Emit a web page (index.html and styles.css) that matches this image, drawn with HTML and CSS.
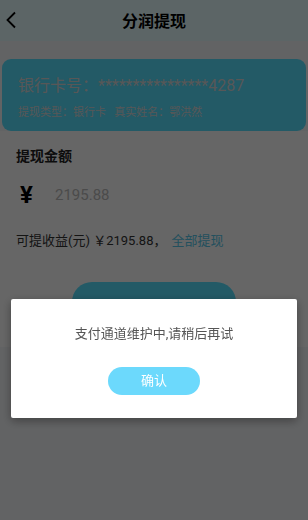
FILE: index.html
```html
<!DOCTYPE html>
<html lang="zh">
<head>
    <meta charset="UTF-8">
    <title>分润提现</title>
    <link rel="stylesheet" href="styles.css">
</head>
<body>
    <div class="page">
        <div class="header">
            <svg class="back" width="12" height="18" viewBox="0 0 12 18"><path d="M10 1.5 L2.5 9 L10 16.5" fill="none" stroke="#000" stroke-width="1.8"/></svg>
            <div class="title">分润提现</div>
        </div>

        <div class="card">
            <div class="card-no">银行卡号：****************4287</div>
            <div class="card-info">提现类型：银行卡&nbsp;&nbsp;&nbsp;真实姓名：鄂洪然</div>
        </div>

        <div class="form">
            <div class="label">提现金额</div>
            <div class="amount">
                <span class="yen">¥</span>
                <span class="num">2195.88</span>
            </div>
            <div class="usable">可提收益(元) ￥2195.88，<span class="all">全部提现</span></div>
            <div class="submit"></div>
        </div>
    </div>

    <div class="mask">
        <div class="dialog">
            <p class="msg">支付通道维护中,请稍后再试</p>
            <div class="ok">确认</div>
        </div>
    </div>
</body>
</html>
```

FILE: styles.css
```css
body,p{ margin: 0; padding: 0; }
body{
    font-family: Roboto, "Noto Sans CJK SC", sans-serif;
    background: #f5f7fa;
}

.page{
    width: 308px;
    height: 520px;
    overflow: hidden;
}

.header{
    height: 41px;
    background: #e6fcff;
    display: flex;
    align-items: center;
    justify-content: center;
    position: relative;
}
.header .back{
    position: absolute;
    left: 5px;
    top: 11px;
}
.header .title{
    font-size: 16px;
    font-weight: bold;
    color: #000;
    margin-top: -2px;
}

.card{
    margin: 18px 2px 0;
    height: 72px;
    background: #58e0ff;
    border-radius: 9px;
    padding: 0 16px;
    box-sizing: border-box;
    color: #dadada;
}
.card-no{
    padding-top: 16px;
    font-size: 16px;
    line-height: 22px;
}
.card-info{
    margin-top: 8px;
    font-size: 11px;
    line-height: 16px;
}

.form{
    background: #fff;
    padding: 16px 16px 0;
    height: 200px;
}
.label{
    font-size: 14px;
    font-weight: bold;
    color: #222;
    line-height: 18px;
}
.amount{
    display: flex;
    align-items: center;
    height: 40px;
    margin-top: 10px;
}
.yen{
    font-size: 24px;
    font-weight: bold;
    color: #000;
    width: 38px;
    padding-left: 4px;
}
.num{
    font-size: 15px;
    color: #bbb;
    margin-left: -3px;
}
.usable{
    margin-top: 17px;
    font-size: 13px;
    color: #333;
    line-height: 18px;
}
.usable .all{
    color: #58c8ea;
    margin-left: 5px;
}
.submit{
    width: 164px;
    height: 40px;
    border-radius: 20px;
    background: #58e0ff;
    margin: 32px auto 0;
}

.mask{
    position: fixed;
    left: 0;
    top: 0;
    width: 100%;
    height: 100%;
    background: rgba(0,0,0,.6);
}
.dialog{
    position: absolute;
    left: 11px;
    right: 11px;
    top: 299px;
    height: 119px;
    background: #fff;
    border-radius: 2px;
    box-shadow: 0 3px 10px rgba(0,0,0,.35);
    display: flex;
    flex-direction: column;
    align-items: center;
}
.msg{
    margin-top: 26px;
    font-size: 13px;
    line-height: 18px;
    color: #555;
}
.ok{
    margin-top: 24px;
    width: 92px;
    height: 28px;
    line-height: 28px;
    border-radius: 14px;
    background: #6cd9fc;
    color: #fff;
    font-size: 13px;
    text-align: center;
}
```
